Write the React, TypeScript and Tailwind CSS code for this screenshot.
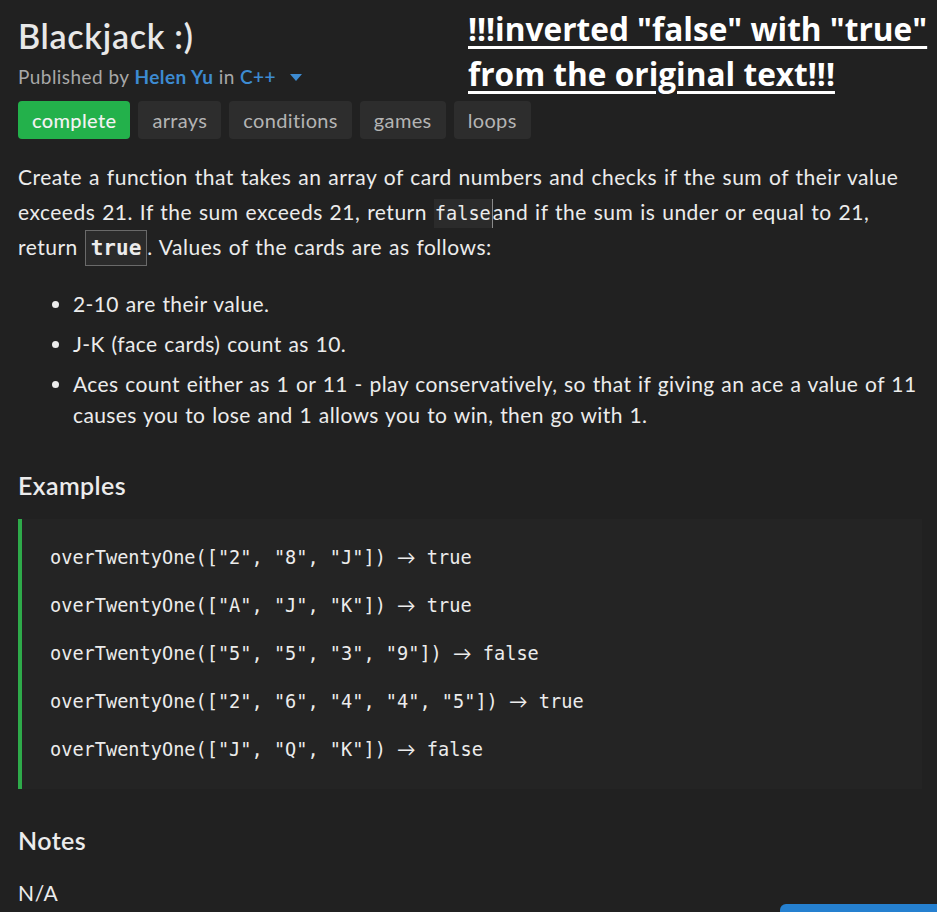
import React from "react";

const examples: [string, string][] = [
  ['overTwentyOne(["2", "8", "J"])', "true"],
  ['overTwentyOne(["A", "J", "K"])', "true"],
  ['overTwentyOne(["5", "5", "3", "9"])', "false"],
  ['overTwentyOne(["2", "6", "4", "4", "5"])', "true"],
  ['overTwentyOne(["J", "Q", "K"])', "false"],
];

const mono = { fontFamily: "'DejaVu Sans Mono', monospace" };

export default function App() {
  return (
    <div
      className="relative w-[937px] h-[912px] overflow-hidden bg-[#212121] text-[#e8e8e8] px-[18px]"
      style={{ fontFamily: "Lato, 'Noto Sans', sans-serif" }}
    >
      <div
        className="absolute left-[468px] top-[6px] text-white font-bold text-[31.6px] leading-[45px] underline underline-offset-[5px] decoration-[3px]"
        style={{ fontFamily: "'Open Sans', 'Noto Sans', sans-serif" }}
      >
        <div>!!!inverted "false" with "true"</div>
        <div>from the original text!!!</div>
      </div>

      <h1 className="pt-[16px] text-[34px] leading-[40px] font-semibold tracking-[0.7px] text-[#e8e8e8]">Blackjack :)</h1>
      <div className="mt-[7px] text-[19px] leading-[28px] tracking-[0.45px] text-[#a8a8a8] flex items-center">
        <span>Published by&nbsp;</span>
        <span className="text-[#3d8bd1] font-bold">Helen Yu</span>
        <span>&nbsp;in&nbsp;</span>
        <span className="text-[#3d8bd1] font-semibold">C++</span>
        <svg className="ml-[14px]" width="12" height="7" viewBox="0 0 12 7">
          <path d="M0 0 L12 0 L6 7 Z" fill="#3d8bd1" />
        </svg>
      </div>

      <div className="mt-[10px] flex gap-[8px] tracking-[0.35px]">
        <span className="h-[38px] px-[14px] flex items-center rounded-[4px] bg-[#23b14b] text-[#f2f2f2] text-[20px] font-medium">complete</span>
        {["arrays", "conditions", "games", "loops"].map((t) => (
          <span key={t} className="h-[38px] px-[14px] flex items-center rounded-[4px] bg-[#2d2d2d] text-[#b4b4b4] text-[20px]">
            {t}
          </span>
        ))}
      </div>

      <p className="mt-[20px] text-[21px] leading-[35px] tracking-[0.5px] [word-spacing:1px] text-[#ececec] w-[904px]">
        Create a function that takes an array of card numbers and checks if the sum of their value exceeds 21. If the sum exceeds 21, return{" "}
        <code className="bg-[#2b2b2b] px-[1px] py-[4px] leading-none text-[18.6px] tracking-normal border-r border-[#8a8a8a]" style={mono}>false</code>
        and if the sum is under or equal to 21, return{" "}
        <code className="bg-[#2b2b2b] px-[5px] py-[5px] leading-none text-[21px] tracking-normal font-bold border border-[#6a6a6a]" style={mono}>true</code>
        . Values of the cards are as follows:
      </p>

      <ul className="mt-[24px] pl-[55px] list-disc text-[21px] leading-[31px] tracking-[0.4px] [word-spacing:1px] text-[#ececec]">
        <li className="mb-[9px]">2-10 are their value.</li>
        <li className="mb-[9px]">J-K (face cards) count as 10.</li>
        <li>
          Aces count either as 1 or 11 - play conservatively, so that if giving an ace a value of 11 causes you to lose and 1 allows you to win, then go with 1.
        </li>
      </ul>

      <h2 className="mt-[39px] text-[25px] leading-[32px] font-semibold tracking-[0.4px] text-[#ececec]">Examples</h2>

      <div className="mt-[18px] w-[904px] bg-[#242424] border-l-[4px] border-[#2eaa4a] pl-[28px] pt-[14px] pb-[16px]" style={mono}>
        {examples.map(([call, res], i) => (
          <div key={i} className="h-[48px] leading-[48px] text-[18.6px] text-[#ececec] whitespace-pre">
            {call} <span style={{ fontFamily: "Lato, sans-serif" }}>→</span> {res}
          </div>
        ))}
      </div>

      <h2 className="mt-[35px] text-[25px] leading-[32px] font-semibold tracking-[0.4px] text-[#ececec]">Notes</h2>
      <p className="mt-[22px] text-[21px] leading-[30px] tracking-[0.6px] text-[#ececec]">N/A</p>

      <div className="absolute left-[780px] top-[904px] w-[170px] h-[40px] rounded-[6px] bg-[#2580d0]" />
    </div>
  );
}
